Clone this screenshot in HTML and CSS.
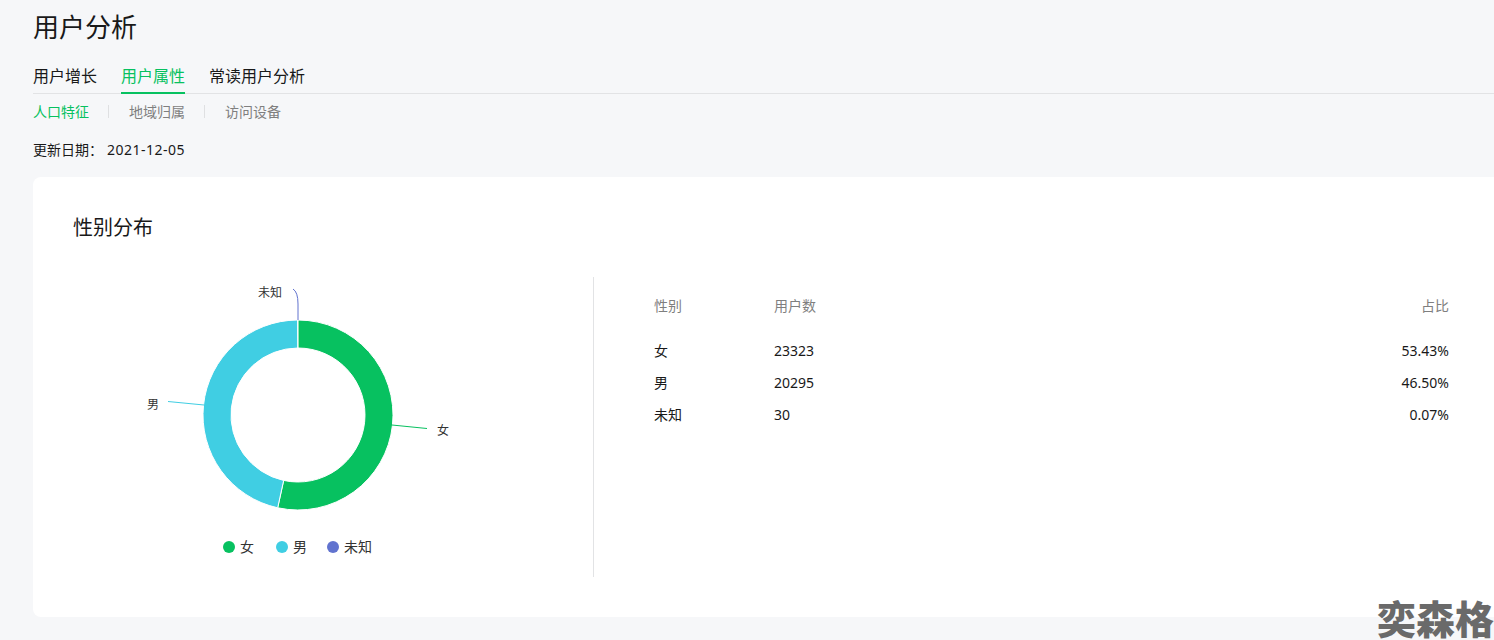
FILE: index.html
```html
<!DOCTYPE html>
<html lang="zh-CN">
<head>
<meta charset="utf-8">
<title>用户分析</title>
<link rel="stylesheet" href="styles.css">
</head>
<body>
<main class="page">
  <h1 class="title">用户分析</h1>
  <nav class="tabs">
    <a class="tab">用户增长</a>
    <a class="tab tab-active">用户属性</a>
    <a class="tab">常读用户分析</a>
  </nav>
  <nav class="subtabs">
    <a class="subtab subtab-active">人口特征</a>
    <a class="subtab">地域归属</a>
    <a class="subtab">访问设备</a>
  </nav>
  <p class="date"><span class="date-label">更新日期：</span><span class="date-value">2021-12-05</span></p>
  <section class="card">
    <h2 class="card-title">性别分布</h2>
    <div class="card-body">
      <div class="chart">
        <svg class="donut" viewBox="73 277 520 300" width="520" height="300">
          <path class="slice-f" d="M298 320 A95 95 0 1 1 277.68 507.8 L283.67 480.45 A67 67 0 1 0 298 348 Z"/>
          <path class="slice-m" d="M277.68 507.8 A95 95 0 0 1 297.59 320 L297.71 348 A67 67 0 0 0 283.67 480.45 Z"/>
          <path class="lead lead-f" d="M392 425 L427 428.5"/>
          <path class="lead lead-m" d="M204 405 L168 401.5"/>
          <path class="lead lead-u" d="M298 320 L298 304 Q298 292 293 289"/>
          <text class="label" x="258" y="297">未知</text>
          <text class="label" x="147" y="409">男</text>
          <text class="label" x="437" y="435">女</text>
          <circle class="dot-f" cx="229" cy="547" r="6"/>
          <text class="legend" x="240" y="552">女</text>
          <circle class="dot-m" cx="282" cy="547" r="6"/>
          <text class="legend" x="293" y="552">男</text>
          <circle class="dot-u" cx="333" cy="547" r="6"/>
          <text class="legend" x="344" y="552">未知</text>
        </svg>
      </div>
      <table class="stats">
        <thead>
          <tr><th>性别</th><th>用户数</th><th class="num">占比</th></tr>
        </thead>
        <tbody>
          <tr><td>女</td><td>23323</td><td class="num">53.43%</td></tr>
          <tr><td>男</td><td>20295</td><td class="num">46.50%</td></tr>
          <tr><td>未知</td><td>30</td><td class="num">0.07%</td></tr>
        </tbody>
      </table>
    </div>
  </section>
</main>
<div class="watermark">奕森格</div>
</body>
</html>
```

FILE: styles.css
```css
html, body {
  margin: 0;
  height: 640px;
  overflow: hidden;
  background: #f6f7f9;
}
body {
  font-family: "Noto Sans", "Noto Sans CJK SC", sans-serif;
  color: #191919;
  font-size: 14px;
  position: relative;
}
.page {
  padding: 8px 0 0 33px;
}
.title {
  margin: 0;
  font-size: 26px;
  font-weight: 400;
  line-height: 38px;
}
.tabs {
  display: flex;
  gap: 24px;
  margin-top: 14px;
  border-bottom: 1px solid #e2e3e5;
  height: 33px;
  box-sizing: content-box;
}
.tab {
  font-size: 16px;
  line-height: 32px;
  height: 33px;
  box-sizing: border-box;
}
.tab-active {
  color: #07c160;
  border-bottom: 2px solid #07c160;
  height: 34px;
}
.subtabs {
  display: flex;
  margin-top: 8px;
  height: 20px;
  align-items: center;
}
.subtab {
  color: #7f7f7f;
  line-height: 20px;
  position: relative;
  padding-right: 39px;
}
.subtab + .subtab {
  padding-left: 0;
}
.subtab:not(:last-child) {
  background: linear-gradient(#dfe0e2, #dfe0e2) no-repeat 75px 3px / 1px 13px;
  padding-right: 40px;
}
.subtab-active {
  color: #07c160;
}
.date {
  margin: 18px 0 0;
  line-height: 20px;
  display: flex;
}
.date-label {
  width: 74px;
}
.date-value {
  letter-spacing: 0.5px;
}
.card {
  margin: 17px -30px 0 0;
  height: 440px;
  box-sizing: border-box;
  background: #fff;
  border-radius: 8px;
  padding: 37px 0 0 40px;
}
.card-title {
  margin: 0;
  font-size: 20px;
  font-weight: 400;
  line-height: 28px;
}
.card-body {
  display: flex;
  margin-top: 35px;
  height: 300px;
}
.chart {
  width: 520px;
  flex: none;
  border-right: 1px solid #e2e3e5;
}
.donut {
  display: block;
}
.slice-f, .slice-m {
  stroke: #fff;
  stroke-width: 1;
}
.slice-f { fill: #07c160; }
.slice-m { fill: #40cee3; }
.lead {
  fill: none;
  stroke-width: 1;
}
.lead-f { stroke: #07c160; }
.lead-m { stroke: #40cee3; }
.lead-u { stroke: #6173cf; }
.label {
  font-size: 12px;
  fill: #333;
}
.legend {
  font-size: 14px;
  fill: #333;
}
.dot-f { fill: #07c160; }
.dot-m { fill: #40cee3; }
.dot-u { fill: #6173cf; }
.stats {
  margin: -1px 0 0 60px;
  width: 795px;
  height: 154px;
  border-collapse: collapse;
  table-layout: fixed;
}
.stats th, .stats td {
  padding: 0;
  text-align: left;
  font-weight: 400;
  height: 32px;
}
.stats th {
  color: #7f7f7f;
  height: 58px;
}
.stats th:first-child {
  width: 120px;
}
.stats th:nth-child(2) {
  width: 300px;
}
.stats .num {
  text-align: right;
}
.watermark {
  position: absolute;
  right: 0;
  top: 598px;
  font-family: "Noto Sans CJK SC", sans-serif;
  font-size: 39px;
  font-weight: 900;
  line-height: 39px;
  color: #6a6a6a;
  white-space: nowrap;
}
```
